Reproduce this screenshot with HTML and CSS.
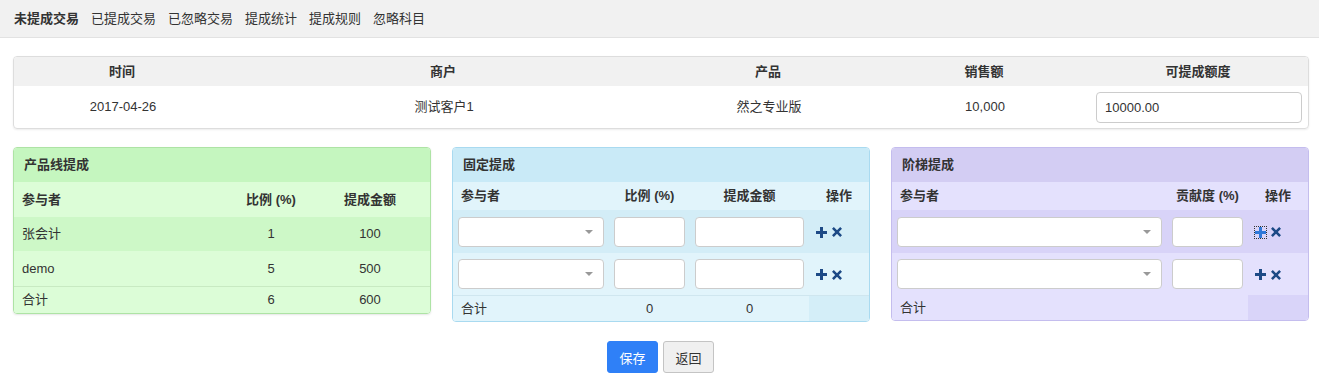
FILE: index.html
```html
<!DOCTYPE html>
<html lang="zh-CN">
<head>
    <meta charset="UTF-8">
    <title>提成</title>
    <link rel="stylesheet" href="styles.css">
</head>
<body>
    <nav class="tabs">
        <a href="#" class="active">未提成交易</a>
        <a href="#">已提成交易</a>
        <a href="#">已忽略交易</a>
        <a href="#">提成统计</a>
        <a href="#">提成规则</a>
        <a href="#">忽略科目</a>
    </nav>

    <div class="summary">
        <table>
            <thead>
                <tr>
                    <th class="w-date">时间</th>
                    <th class="w-customer">商户</th>
                    <th class="w-product">产品</th>
                    <th class="w-amount">销售额</th>
                    <th>可提成额度</th>
                </tr>
            </thead>
            <tbody>
                <tr>
                    <td>2017-04-26</td>
                    <td>测试客户1</td>
                    <td>然之专业版</td>
                    <td>10,000</td>
                    <td><input class="field wide" type="text" value="10000.00"></td>
                </tr>
            </tbody>
        </table>
    </div>

    <div class="panels">
        <div class="panel green">
            <div class="panel-heading">产品线提成</div>
            <table>
                <thead>
                    <tr>
                        <th class="left">参与者</th>
                        <th class="g-rate">比例 (%)</th>
                        <th class="g-money">提成金额</th>
                    </tr>
                </thead>
                <tbody>
                    <tr class="hl">
                        <td class="left">张会计</td>
                        <td>1</td>
                        <td class="g-money">100</td>
                    </tr>
                    <tr>
                        <td class="left">demo</td>
                        <td>5</td>
                        <td class="g-money">500</td>
                    </tr>
                    <tr class="total">
                        <td class="left">合计</td>
                        <td>6</td>
                        <td class="g-money">600</td>
                    </tr>
                </tbody>
            </table>
        </div>

        <div class="panel blue">
            <div class="panel-heading">固定提成</div>
            <table class="form-table">
                <thead>
                    <tr>
                        <th class="left">参与者</th>
                        <th class="b-rate">比例 (%)</th>
                        <th class="b-money">提成金额</th>
                        <th class="ops">操作</th>
                    </tr>
                </thead>
                <tbody>
                    <tr class="hl">
                        <td><div class="select"></div></td>
                        <td><input class="field" type="text"></td>
                        <td><input class="field" type="text"></td>
                        <td class="icons">
                            <a href="#" class="icon"><svg width="11" height="11" viewBox="0 0 11 11"><path d="M4 0h3v4h4v3H7v4H4V7H0V4h4z"/></svg></a>
                            <a href="#" class="icon"><svg width="10" height="10" viewBox="0 0 10 10"><path d="M1.8 0L5 3.2 8.2 0 10 1.8 6.8 5 10 8.2 8.2 10 5 6.8 1.8 10 0 8.2 3.2 5 0 1.8z"/></svg></a>
                        </td>
                    </tr>
                    <tr>
                        <td><div class="select"></div></td>
                        <td><input class="field" type="text"></td>
                        <td><input class="field" type="text"></td>
                        <td class="icons">
                            <a href="#" class="icon"><svg width="11" height="11" viewBox="0 0 11 11"><path d="M4 0h3v4h4v3H7v4H4V7H0V4h4z"/></svg></a>
                            <a href="#" class="icon"><svg width="10" height="10" viewBox="0 0 10 10"><path d="M1.8 0L5 3.2 8.2 0 10 1.8 6.8 5 10 8.2 8.2 10 5 6.8 1.8 10 0 8.2 3.2 5 0 1.8z"/></svg></a>
                        </td>
                    </tr>
                    <tr class="total">
                        <td class="sum-label">合计</td>
                        <td>0</td>
                        <td>0</td>
                        <td class="blank"></td>
                    </tr>
                </tbody>
            </table>
        </div>

        <div class="panel purple">
            <div class="panel-heading">阶梯提成</div>
            <table class="form-table">
                <thead>
                    <tr>
                        <th class="left">参与者</th>
                        <th class="p-rate">贡献度 (%)</th>
                        <th class="ops">操作</th>
                    </tr>
                </thead>
                <tbody>
                    <tr class="hl">
                        <td><div class="select"></div></td>
                        <td><input class="field" type="text"></td>
                        <td class="icons">
                            <a href="#" class="icon focused"><svg width="11" height="11" viewBox="0 0 11 11"><path d="M4 0h3v4h4v3H7v4H4V7H0V4h4z"/></svg></a>
                            <a href="#" class="icon"><svg width="10" height="10" viewBox="0 0 10 10"><path d="M1.8 0L5 3.2 8.2 0 10 1.8 6.8 5 10 8.2 8.2 10 5 6.8 1.8 10 0 8.2 3.2 5 0 1.8z"/></svg></a>
                        </td>
                    </tr>
                    <tr>
                        <td><div class="select"></div></td>
                        <td><input class="field" type="text"></td>
                        <td class="icons">
                            <a href="#" class="icon"><svg width="11" height="11" viewBox="0 0 11 11"><path d="M4 0h3v4h4v3H7v4H4V7H0V4h4z"/></svg></a>
                            <a href="#" class="icon"><svg width="10" height="10" viewBox="0 0 10 10"><path d="M1.8 0L5 3.2 8.2 0 10 1.8 6.8 5 10 8.2 8.2 10 5 6.8 1.8 10 0 8.2 3.2 5 0 1.8z"/></svg></a>
                        </td>
                    </tr>
                    <tr class="total">
                        <td class="sum-label">合计</td>
                        <td></td>
                        <td class="blank"></td>
                    </tr>
                </tbody>
            </table>
        </div>
    </div>

    <div class="actions">
        <button class="btn primary">保存</button>
        <button class="btn">返回</button>
    </div>
</body>
</html>
```

FILE: styles.css
```css
body {
    font-family: "Liberation Sans", "Noto Sans CJK SC", sans-serif;
    font-size: 13px;
    line-height: 18px;
    color: #333;
    margin: 0;
    background-color: #fff;
}
a {
    color: #333;
    text-decoration: none;
}
table {
    width: 100%;
    border-collapse: collapse;
    table-layout: fixed;
}
th {
    font-weight: bold;
}

/* top tabs */
.tabs {
    display: flex;
    gap: 12px;
    height: 37px;
    align-items: center;
    padding: 0 14px;
    background-color: #f1f1f1;
    border-bottom: 1px solid #e2e2e2;
}
.tabs a.active {
    font-weight: bold;
}

/* transaction summary */
.summary {
    margin: 18px 10px 0 13px;
    border: 1px solid #ddd;
    border-radius: 4px;
    box-shadow: 0 1px 2px rgba(0, 0, 0, 0.08);
    overflow: hidden;
}
.summary th {
    height: 29px;
    padding: 0;
    background-color: #f1f1f1;
    text-align: center;
}
.summary td {
    height: 42px;
    padding: 0 6px 0 8px;
    text-align: center;
}
.w-date { width: 216px; }
.w-customer { width: 426px; }
.w-product { width: 224px; }
.w-amount { width: 208px; }

.field {
    display: block;
    box-sizing: border-box;
    width: 100%;
    height: 30px;
    padding: 0 6px;
    border: 1px solid #ccc;
    border-radius: 4px;
    background: #fff;
    font: inherit;
    color: #333;
}
.field.wide {
    height: 31px;
    padding: 0 8px;
}

/* commission panels */
.panels {
    display: flex;
    gap: 21px;
    margin: 18px 10px 0 13px;
    align-items: flex-start;
}
.panel {
    flex: 1;
    border: 1px solid;
    border-radius: 4px;
    overflow: hidden;
}
.panel-heading {
    height: 34px;
    line-height: 34px;
    padding: 0 10px;
    font-weight: bold;
}
.panel th,
.panel td {
    padding: 0 5px;
    text-align: center;
}
.panel .left {
    text-align: left;
    padding-left: 8px;
}
.panel th {
    height: 35px;
}
.panel td {
    height: 34px;
}
.panel tr.total td {
    height: 25px;
}

.green {
    border-color: #aee3a5;
    box-shadow: 0 1px 2px rgba(0, 0, 0, 0.1);
}
.green .panel-heading { background-color: #c5f6bf; }
.green table { background-color: #dcfdd7; }
.green tr.hl { background-color: #cdf8c7; }
.green tr:nth-child(2) td { height: 35px; }
.green tr.total { border-top: 1px solid #c8eac2; }
.green tr.total td { height: 26px; }
.g-rate { width: 78px; }
.g-money { width: 100px; }
.panel .g-money { padding-right: 10px; }

.form-table th {
    height: 28px;
}
.form-table td {
    height: 42px;
}
.form-table tr.hl td {
    height: 43px;
}
.form-table td.icons {
    text-align: left;
    padding-left: 7px;
}
.form-table .sum-label {
    text-align: left;
    padding-left: 8px;
}

.blue {
    border-color: #a9daf0;
}
.blue .panel-heading { background-color: #c9eaf7; }
.blue table { background-color: #e1f4fb; }
.blue tr.hl { background-color: #d3edf7; }
.blue tr.total { border-top: 1px solid #cfe6ef; }
.blue td.blank { background-color: #d4eef8; }
.b-rate { width: 71px; }
.b-money { width: 109px; }
.ops { width: 50px; }

.purple {
    border-color: #c4bdee;
}
.purple .panel-heading { background-color: #d3cdf3; }
.purple table { background-color: #e4e1fd; }
.purple tr.hl { background-color: #d8d3f8; }
.purple td.blank { background-color: #d9d4f9; }
.p-rate { width: 71px; }

.select {
    position: relative;
    box-sizing: border-box;
    height: 30px;
    border: 1px solid #ccc;
    border-radius: 4px;
    background: #fff;
}
.select::after {
    content: "";
    position: absolute;
    right: 10px;
    top: 12px;
    border-left: 4px solid transparent;
    border-right: 4px solid transparent;
    border-top: 4px solid #999;
}

.icon {
    display: inline-block;
    vertical-align: middle;
    line-height: 0;
    margin-right: 1px;
}
.icon svg {
    fill: #1d4a86;
}
.icon.focused {
    outline: 1px dotted #333;
}
.icon.focused svg {
    fill: #2f78d8;
}

/* buttons */
.actions {
    display: flex;
    justify-content: center;
    gap: 5px;
    margin-top: 19px;
    padding-left: 2px;
}
.btn {
    width: 51px;
    height: 32px;
    padding: 0;
    border: 1px solid #c4c4c4;
    border-radius: 3px;
    background-color: #f0f0f0;
    font-family: inherit;
    font-size: 13px;
    color: #333;
    cursor: pointer;
}
.btn.primary {
    background-color: #2f80f7;
    border-color: #2f80f7;
    color: #fff;
}
```
